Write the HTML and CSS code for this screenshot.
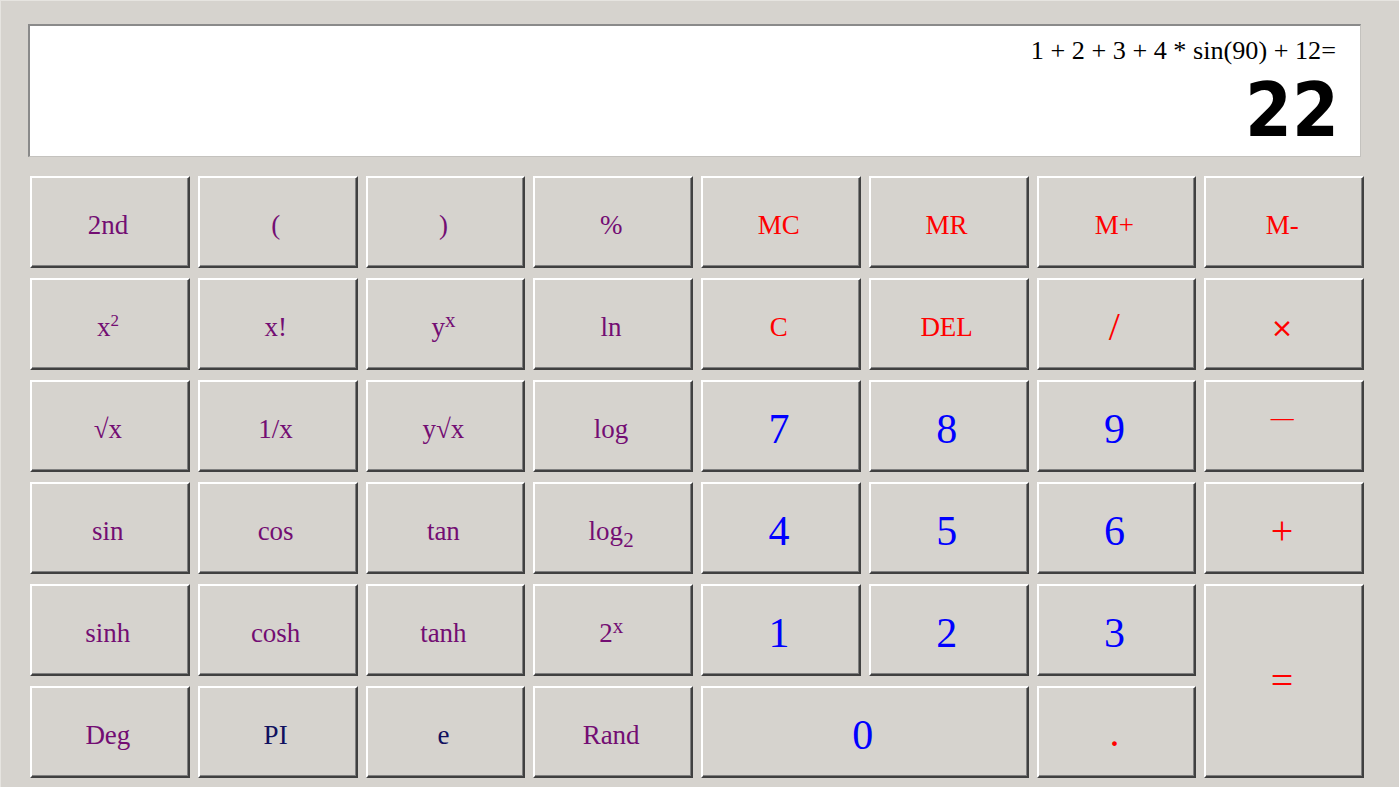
FILE: index.html
```html
<!DOCTYPE html>
<html>
<head>
<meta charset="utf-8">
<title>Calculator</title>
<link rel="stylesheet" href="styles.css">
</head>
<body>
<div class="calc">
  <div class="display">
    <div class="expr">1 + 2 + 3 + 4 * sin(90) + 12=</div>
    <div class="result">22</div>
  </div>
  <div class="keys">
    <button class="key fn"><span>2nd</span></button>
    <button class="key fn"><span>(</span></button>
    <button class="key fn"><span>)</span></button>
    <button class="key fn"><span>%</span></button>
    <button class="key red"><span>MC</span></button>
    <button class="key red"><span>MR</span></button>
    <button class="key red"><span>M+</span></button>
    <button class="key red"><span>M-</span></button>

    <button class="key fn"><span>x<sup class="sup-num">2</sup></span></button>
    <button class="key fn"><span>x!</span></button>
    <button class="key fn"><span>y<sup class="sup-x">x</sup></span></button>
    <button class="key fn"><span>ln</span></button>
    <button class="key red"><span>C</span></button>
    <button class="key red"><span>DEL</span></button>
    <button class="key op"><span>/</span></button>
    <button class="key op times"><span>×</span></button>

    <button class="key fn"><span>√x</span></button>
    <button class="key fn"><span>1/x</span></button>
    <button class="key fn"><span>y√x</span></button>
    <button class="key fn"><span>log</span></button>
    <button class="key num"><span>7</span></button>
    <button class="key num"><span>8</span></button>
    <button class="key num"><span>9</span></button>
    <button class="key op"><span class="minus">—</span></button>

    <button class="key fn"><span>sin</span></button>
    <button class="key fn"><span>cos</span></button>
    <button class="key fn"><span>tan</span></button>
    <button class="key fn"><span>log<sub class="sub-num">2</sub></span></button>
    <button class="key num"><span>4</span></button>
    <button class="key num"><span>5</span></button>
    <button class="key num"><span>6</span></button>
    <button class="key op"><span>+</span></button>

    <button class="key fn"><span>sinh</span></button>
    <button class="key fn"><span>cosh</span></button>
    <button class="key fn"><span>tanh</span></button>
    <button class="key fn"><span>2<sup class="sup-x">x</sup></span></button>
    <button class="key num"><span>1</span></button>
    <button class="key num"><span>2</span></button>
    <button class="key num"><span>3</span></button>
    <button class="key op equals"><span>=</span></button>

    <button class="key fn"><span>Deg</span></button>
    <button class="key navy"><span>PI</span></button>
    <button class="key navy"><span>e</span></button>
    <button class="key fn"><span>Rand</span></button>
    <button class="key num zero"><span>0</span></button>
    <button class="key op dot"><span>.</span></button>
  </div>
</div>
</body>
</html>
```

FILE: styles.css
```css
html, body {
  margin: 0;
  padding: 0;
  background: #d6d3ce;
}

body {
  width: 1399px;
  height: 787px;
  overflow: hidden;
  box-sizing: border-box;
  border-top: 1px solid #e6e4e0;
  border-left: 1px solid #e6e4e0;
}

.calc {
  padding: 23px 35px 0 27px;
  display: flex;
  flex-direction: column;
}

.display {
  width: 1333px;
  height: 133px;
  box-sizing: border-box;
  background: #ffffff;
  border-style: solid;
  border-width: 2px 1px 1px 2px;
  border-color: #8a8a8a #c4c2be #c4c2be #8a8a8a;
  padding-top: 10px;
  text-align: right;
}

.expr {
  font-family: "Liberation Serif", "Times New Roman", serif;
  font-size: 26.2px;
  line-height: 30px;
  color: #000;
  padding-right: 24px;
}

.result {
  margin-top: 7px;
  font-family: "DejaVu Sans Condensed", "DejaVu Sans", sans-serif;
  font-stretch: condensed;
  font-weight: bold;
  font-size: 75px;
  line-height: 75px;
  color: #000;
  padding-right: 21px;
}

.keys {
  margin-top: 19px;
  margin-left: 2px;
  width: 1334px;
  display: grid;
  grid-template-columns: repeat(8, 1fr);
  grid-template-rows: repeat(6, 92px);
  column-gap: 8px;
  row-gap: 10px;
}

.key {
  margin: 0;
  padding: 6px 4px 0 0;
  background: #d6d3ce;
  border-style: solid;
  border-width: 2px;
  border-color: #ffffff #404040 #404040 #ffffff;
  box-shadow: inset -1px -1px 0 #808080;
  font-family: "Liberation Serif", "Times New Roman", serif;
  font-size: 27px;
  line-height: 1;
  display: flex;
  align-items: center;
  justify-content: center;
  cursor: default;
}

.fn { color: #730d73; }
.navy { color: #10105e; }
.red { color: #ff0000; }

.num {
  color: #0000ff;
  font-size: 42px;
}

.op {
  color: #ff0000;
  font-size: 40px;
}

.times {
  font-family: "DejaVu Sans", sans-serif;
  font-size: 27px;
}

.minus {
  font-size: 23px;
  line-height: 1;
  display: inline-block;
  transform: translateY(-12px);
}

.equals {
  grid-column: 8;
  grid-row: 5 / span 2;
  padding-top: 0;
}

.zero {
  grid-column: 5 / span 2;
}

.dot {
  padding-top: 2px;
}

.sup-num {
  font-size: 17px;
  vertical-align: 10px;
  line-height: 0;
}

.sup-x {
  font-size: 21px;
  vertical-align: 9px;
  line-height: 0;
}

.sub-num {
  font-size: 21px;
  vertical-align: -7px;
  line-height: 0;
}
```
